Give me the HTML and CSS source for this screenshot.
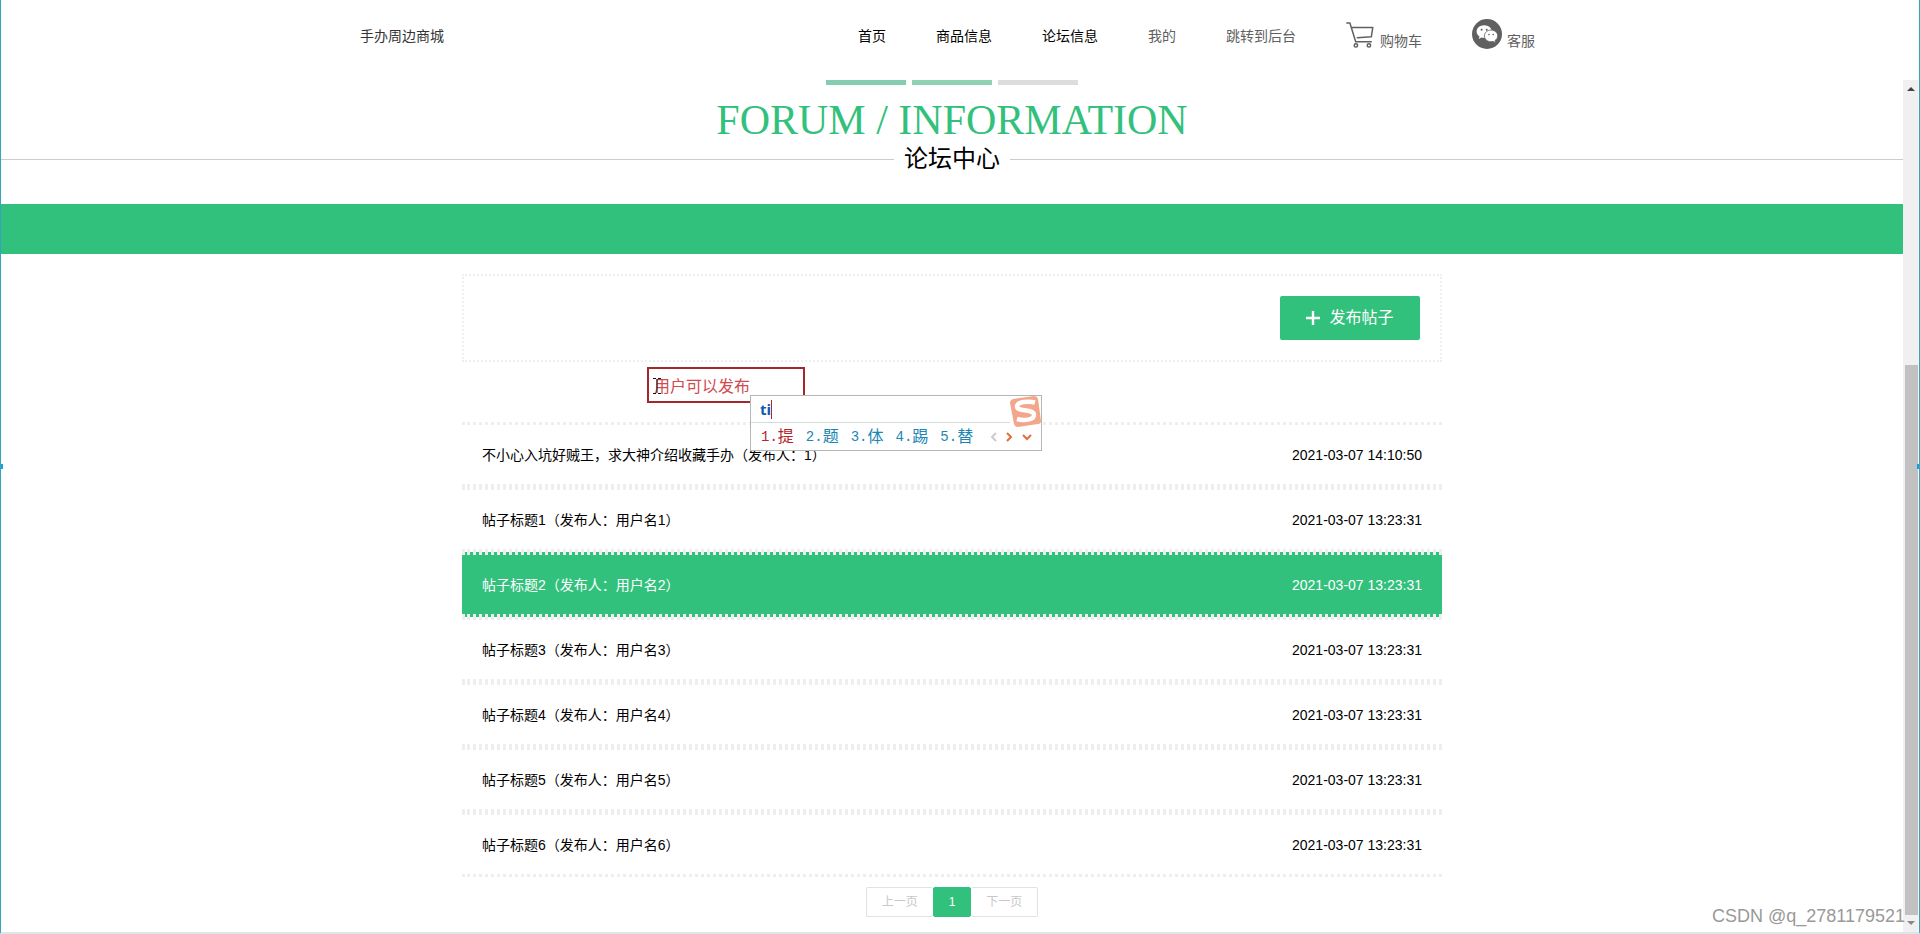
FILE: index.html
```html
<!DOCTYPE html>
<html lang="zh-CN">
<head>
<meta charset="utf-8">
<title>论坛中心</title>
<link rel="stylesheet" href="styles.css">
</head>
<body>
<div class="window">
  <header class="topbar">
    <div class="topbar-inner">
      <a class="brand" href="#">手办周边商城</a>
      <nav class="nav">
        <a class="nav-link strong" href="#">首页</a>
        <a class="nav-link strong" href="#">商品信息</a>
        <a class="nav-link strong" href="#">论坛信息</a>
        <a class="nav-link" href="#">我的</a>
        <a class="nav-link" href="#">跳转到后台</a>
        <a class="nav-link with-icon" href="#">
          <svg class="cart" width="29" height="27" viewBox="0 0 29 27" fill="none" stroke="#606060" stroke-width="1.5" stroke-linejoin="round" stroke-linecap="round"><path d="M.8 1h3.1l5.8 18.7h15.6M5.3 5.5h21.5l-1.5 9.3-14 .9"/><circle cx="9.9" cy="23.4" r="1.7"/><circle cx="22.9" cy="23.4" r="1.7"/></svg>
          <span>购物车</span>
        </a>
        <a class="nav-link with-icon" href="#">
          <svg class="wechat" width="30" height="30" viewBox="0 0 30 30"><circle cx="15" cy="15" r="15" fill="#606060"/><path d="M12.2 6.3c-4.3 0-7.6 2.8-7.6 6.3 0 2 1.1 3.7 2.9 4.9l-.8 2.4 2.8-1.4c.9.2 1.8.4 2.7.4 4.2 0 7.6-2.8 7.6-6.3s-3.4-6.3-7.6-6.3z" fill="#fff"/><path d="M19 11.1c-3.7 0-6.6 2.6-6.6 5.8s2.9 5.8 6.6 5.8c.8 0 1.5-.1 2.2-.3l2.4 1.3-.6-2.2c1.6-1.1 2.7-2.7 2.7-4.6 0-3.2-3-5.8-6.7-5.8z" fill="#fff" stroke="#606060" stroke-width=".8"/><g fill="#606060"><circle cx="9.6" cy="10.8" r="1"/><circle cx="14.7" cy="10.8" r="1"/><circle cx="17" cy="15.6" r=".8"/><circle cx="21.2" cy="15.6" r=".8"/></g></svg>
          <span>客服</span>
        </a>
      </nav>
    </div>
  </header>

  <div class="view">
    <main class="page">
      <div class="slides"><i class="slide"></i><i class="slide second"></i><i class="slide idle"></i></div>
      <div class="heading">
        <p class="heading-en">FORUM / INFORMATION</p>
        <h1 class="heading-zh">论坛中心</h1>
      </div>
      <div class="band"></div>

      <section class="forum">
        <div class="tools">
          <button class="publish" type="button">
            <svg width="14" height="14" viewBox="0 0 14 14" stroke="#fff" stroke-width="2.4"><path d="M7 0v14M0 7h14"/></svg>
            发布帖子
          </button>
        </div>

        <div class="note-row">
          <div class="note">
            <input class="note-input" type="text" value="用户可以发布" aria-label="标注">
            <svg class="ibeam" width="8" height="16" viewBox="0 0 8 16" fill="none" stroke="#111"><path d="M0 .5h3M5 .5h3M0 15.5h3M5 15.5h3M4 1v14"/></svg>
            <div class="ime">
              <div class="ime-typed"><b>ti</b><i class="caret"></i></div>
              <div class="ime-list">
                <span class="pick first"><span class="num">1.</span>提</span>
                <span class="pick"><span class="num">2.</span>题</span>
                <span class="pick"><span class="num">3.</span>体</span>
                <span class="pick"><span class="num">4.</span>踢</span>
                <span class="pick"><span class="num">5.</span>替</span>
                <svg class="arrows" width="42" height="10" viewBox="0 0 42 10" fill="none" stroke="#e0703a" stroke-width="2"><path d="M6 1L2 5l4 4" stroke="#ccc"/><path d="M17 1l4 4-4 4M33 3l4 4 4-4"/></svg>
              </div>
              <svg class="sogou" width="32" height="32" viewBox="0 0 32 32"><path d="M4 3L25 0q3 0 4 3l3 22q0 3-3 3L9 31q-3 0-4-3L1 7q0-3 3-4z" fill="#f3a68a"/><path d="M26 6.5C20 5 8 5.500 8 10.500c0 5.500 17 2 17 8.500 0 5-10 6-17 4" fill="none" stroke="#fff" stroke-width="4.500"/></svg>
            </div>
          </div>
        </div>

        <ul class="posts">
          <li><a class="post" href="#"><span>不小心入坑好贼王，求大神介绍收藏手办（发布人：1）</span><time>2021-03-07 14:10:50</time></a></li>
          <li><a class="post" href="#"><span>帖子标题1（发布人：用户名1）</span><time>2021-03-07 13:23:31</time></a></li>
          <li><a class="post active" href="#"><span>帖子标题2（发布人：用户名2）</span><time>2021-03-07 13:23:31</time></a></li>
          <li><a class="post" href="#"><span>帖子标题3（发布人：用户名3）</span><time>2021-03-07 13:23:31</time></a></li>
          <li><a class="post" href="#"><span>帖子标题4（发布人：用户名4）</span><time>2021-03-07 13:23:31</time></a></li>
          <li><a class="post" href="#"><span>帖子标题5（发布人：用户名5）</span><time>2021-03-07 13:23:31</time></a></li>
          <li><a class="post" href="#"><span>帖子标题6（发布人：用户名6）</span><time>2021-03-07 13:23:31</time></a></li>
        </ul>

        <div class="pager">
          <button class="pager-item" type="button" disabled>上一页</button>
          <button class="pager-item current" type="button">1</button>
          <button class="pager-item" type="button" disabled>下一页</button>
        </div>
      </section>
    </main>
    <div class="scrollbar">
      <svg width="15" height="17" viewBox="0 0 15 17"><path d="M4 11l4-4 4 4z" fill="#444"/></svg>
      <div class="thumb"></div>
      <svg width="15" height="17" viewBox="0 0 15 17"><path d="M4 6l4 4 4-4z" fill="#888"/></svg>
    </div>
  </div>
  <i class="grip left"></i>
  <i class="grip right"></i>
  <div class="watermark">CSDN @q_2781179521</div>
</div>
</body>
</html>
```
FILE: styles.css
```css
* { box-sizing: border-box; }

body {
  margin: 0;
  background: #fff;
  color: #000;
  font: 14px/20px "Liberation Sans", "Noto Sans CJK SC", sans-serif;
}

a { color: inherit; text-decoration: none; }
p, h1, ul { margin: 0; padding: 0; font-weight: 400; list-style: none; }
button, input { font: inherit; }

.window {
  position: relative;
  display: flex;
  flex-direction: column;
  height: 100vh;
  overflow: hidden;
  border: solid #35a5bf;
  border-width: 0 1px;
  border-bottom: 2px solid #dce6e9;
}

.topbar { flex: none; height: 80px; }
.topbar-inner {
  display: flex;
  justify-content: space-between;
  max-width: 1200px;
  margin: 0 auto;
  padding-top: 16px;
}
.brand { color: #333; line-height: 40px; }
.nav { display: flex; }
.nav-link { padding: 0 25px; color: #606060; line-height: 40px; }
.nav-link.strong { color: #000; }
.with-icon { display: flex; gap: 5px; line-height: 50px; }
.cart { margin-top: 6px; }
.wechat { margin-top: 3px; }

.view { display: flex; flex: 1; min-height: 0; }
.page { flex: 1; min-width: 0; overflow: hidden; }

.slides { display: flex; justify-content: center; gap: 6px; }
.slide { width: 80px; height: 5px; background: #84cdae; }
.slide.second { background: #8fd1b3; }
.slide.idle { background: #ddd; }

.heading { height: 119px; padding-top: 9px; text-align: center; }
.heading-en {
  color: #32c17c;
  font: 42px/52px "Liberation Serif", serif;
}
.heading-zh {
  display: flex;
  align-items: center;
  gap: 10px;
  font-size: 24px;
  line-height: 26px;
}
.heading-zh::before, .heading-zh::after {
  content: "";
  flex: 1;
  height: 1px;
  background: #ccc;
}
.band { height: 50px; background: #32c17c; }

.forum { max-width: 980px; margin: 20px auto 0; }
.tools {
  display: flex;
  justify-content: flex-end;
  padding: 20px;
  border: 2px dotted #eee;
}
.publish {
  display: flex;
  align-items: center;
  justify-content: center;
  gap: 9px;
  width: 140px;
  height: 44px;
  padding: 0;
  border: 0;
  border-radius: 2px;
  background: #32c17c;
  color: #fff;
  font-size: 16px;
}

.note-row { height: 60px; padding: 5px 0 0 185px; }
.note { position: relative; width: 158px; }
.note-input {
  display: block;
  width: 100%;
  height: 36px;
  padding: 0 5px;
  border: 2px solid #a3282d;
  border-radius: 0;
  background: transparent;
  color: #d04a4f;
  font-size: 16px;
}
.ibeam { position: absolute; left: 6px; top: 11px; }
.ime {
  position: absolute;
  z-index: 2;
  left: 103px;
  top: 28px;
  width: 292px;
  border: 1px solid #b0b8b8;
  background: #fff;
}
.ime-typed {
  display: flex;
  align-items: center;
  height: 27px;
  margin-right: 31px;
  padding-left: 9px;
  border-bottom: 1px solid #d3dcd6;
  color: #0b5cb5;
  font: 15px/20px "Open Sans", sans-serif;
}
.caret { width: 1px; height: 19px; background: #b3262b; }
.ime-list {
  display: flex;
  align-items: center;
  gap: 12px;
  height: 27px;
  padding-left: 10px;
}
.pick { display: flex; color: #1b86b3; font-size: 16px; }
.pick.first { color: #b3262b; }
.num { font-family: "Liberation Mono", monospace; font-size: 14px; }
.arrows { margin-left: 5px; }
.sogou { position: absolute; right: 0; top: 0; }

.post {
  display: flex;
  justify-content: space-between;
  align-items: center;
  height: 65px;
  padding: 0 20px;
  border: dotted #eee;
  border-width: 3px 0;
}
.post.active { background: #32c17c; color: #fff; }

.pager { display: flex; justify-content: center; margin-top: 10px; }
.pager-item {
  height: 30px;
  padding: 0 15px;
  border: 1px solid #e2e2e2;
  border-radius: 2px;
  background: #fff;
  color: #c8c8c8;
  font-size: 12px;
}
.pager-item:first-child { border-right: 0; }
.pager-item:last-child { border-left: 0; }
.pager-item.current {
  border-color: #32c17c;
  background: #32c17c;
  color: #fff;
}

.scrollbar {
  display: flex;
  flex: none;
  flex-direction: column;
  width: 15px;
  margin-right: 1px;
  background: #f0f0f0;
}
.scrollbar svg { flex: none; }
.thumb { height: 550px; margin: auto 0 0 2px; background: #c1c1c1; }

.grip { position: absolute; top: 464px; width: 3px; height: 5px; background: #1ba1e2; }
.grip.left { left: -1px; }
.grip.right { right: -1px; }
.watermark {
  position: absolute;
  right: 14px;
  bottom: 6px;
  color: #999;
  font-size: 18px;
}
```
